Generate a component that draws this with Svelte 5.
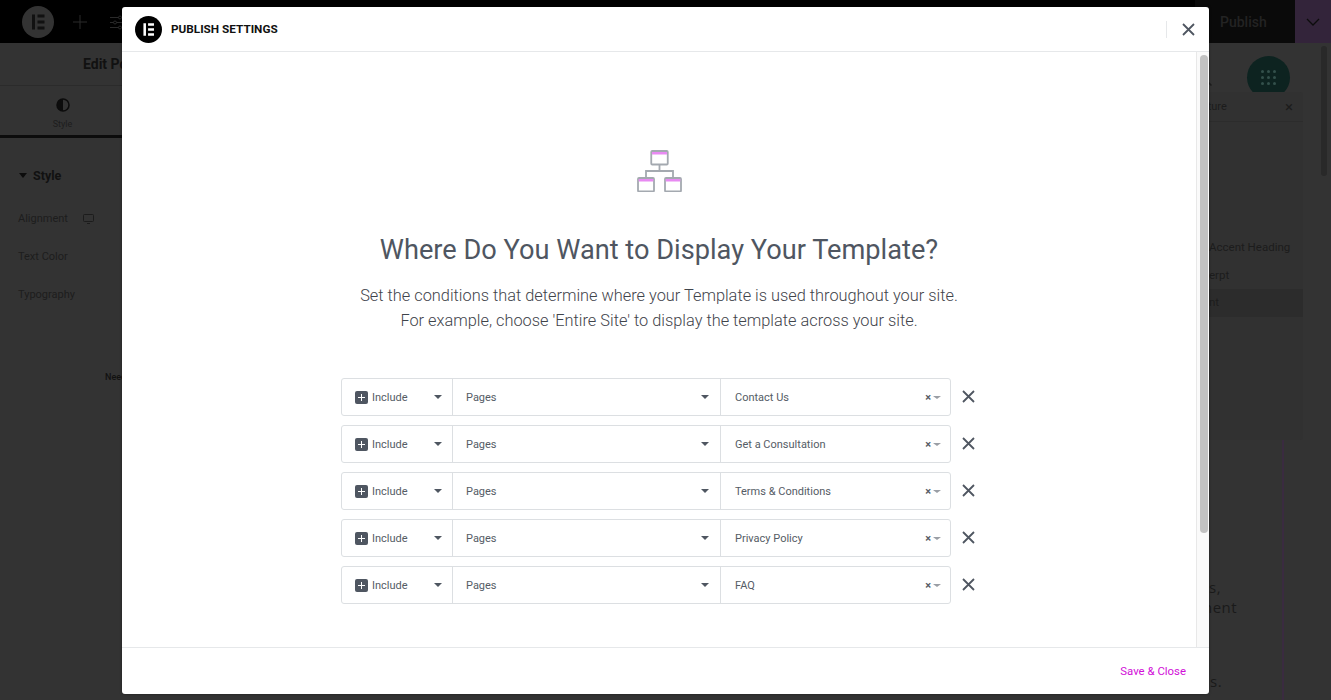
<script>
	const conditions = ['Contact Us', 'Get a Consultation', 'Terms & Conditions', 'Privacy Policy', 'FAQ']
	const layers = ['Accent Heading', 'erpt', 'nt']
</script>

{#snippet logo(size)}
	<svg class="logo" width={size} height={size} viewBox="0 0 32 32">
		<circle cx="16" cy="16" r="16" fill="currentColor" />
		<path d="M10 8.500h3v15h-3zM15.500 8.500h7v3h-7zM15.500 14.500h7v3h-7zM15.500 20.500h7v3h-7z" fill="var(--mark)" />
	</svg>
{/snippet}

<div class="page">
	<header class="topbar">
		<div class="tools">
			<span class="bg-logo">{@render logo(32)}</span>
			<svg width="16" height="16" viewBox="0 0 16 16" stroke="#2a2a2a" fill="none"><path d="M8 1v14M1 8h14" /></svg>
			<svg class="sliders" width="16" height="16" viewBox="0 0 16 16" stroke="#2a2a2a" fill="none"><path d="M0 3.500h16M0 8.500h16M0 13.500h16" /><circle cx="10" cy="3.500" r="1.500" fill="#000" /><circle cx="5" cy="8.500" r="1.500" fill="#000" /><circle cx="10" cy="13.500" r="1.500" fill="#000" /></svg>
		</div>
		<div class="publish">Publish</div>
		<div class="more">
			<svg width="14" height="8" viewBox="0 0 14 8" fill="none" stroke="#0c0c0c" stroke-width="1.300"><path d="M1 1l6 6 6-6" /></svg>
		</div>
	</header>

	<div class="workspace">
		<aside class="panel">
			<div class="panel-title">Edit Post Content</div>
			<div class="tabs">
				<div class="tab">
					<svg width="14" height="14" viewBox="0 0 14 14"><circle cx="7" cy="7" r="6" fill="none" stroke="#0c0c0c" stroke-width="1.500" /><path d="M7 1a6 6 0 0 0 0 12z" fill="#0c0c0c" /></svg>
					<span>Style</span>
				</div>
			</div>
			<div class="section-title"><i class="caret"></i>Style</div>
			<div class="control">Alignment
				<svg width="11" height="10" viewBox="0 0 11 10" fill="none" stroke="#1c1c1c"><rect x="0.500" y="0.500" width="10" height="7" rx="1" /><path d="M4 9.500h3" /></svg>
			</div>
			<div class="control">Text Color</div>
			<div class="control">Typography</div>
			<div class="need">Need Help</div>
		</aside>

		<main class="canvas">
			<div class="canvas-tools">
				<svg width="22" height="22" viewBox="0 0 22 22" fill="none" stroke="#1d1d1d" stroke-width="1.500"><circle cx="8" cy="8" r="6" /><path d="M12.500 12.500l6 6" /></svg>
				<div class="apps">
					{#each Array(9) as _}<i></i>{/each}
				</div>
			</div>
			<div class="copy">
				<p>s,<br />nent</p>
				<p>s.</p>
			</div>
			<div class="rule"></div>
		</main>
		<div class="edge"><i></i></div>
	</div>

	<section class="navigator">
		<div class="nav-head"><span>Structure</span><b>×</b></div>
		<ul>
			{#each layers as layer, i}
				<li class:active={i === 2}>{layer}</li>
			{/each}
		</ul>
	</section>

	<div class="modal">
		<div class="modal-head">
			<span class="head-logo">{@render logo(27)}</span>
			<h2>PUBLISH SETTINGS</h2>
			<button class="close" aria-label="Close">
				<svg width="13" height="13" viewBox="0 0 13 13" stroke="#4f5661" stroke-width="1.800"><path d="M1 1l11 11M12 1L1 12" /></svg>
			</button>
		</div>

		<div class="modal-body">
			<div class="content">
				<svg class="tree" width="45" height="42" viewBox="0 0 45 42" fill="none">
					<path d="M22.500 15v6M9 28v-7h27v7" stroke="#a4a9b0" stroke-width="1.800" />
					<g stroke="#a4a9b0" stroke-width="1.800">
						<rect x="14.250" y="1" width="16.500" height="13.500" rx="1" />
						<rect x="1" y="28" width="16" height="13.500" rx="1" />
						<rect x="28" y="28" width="16" height="13.500" rx="1" />
					</g>
					<g fill="#e88af2">
						<rect x="15" y="2" width="15" height="2.500" />
						<rect x="1.750" y="29" width="14.500" height="2.500" />
						<rect x="28.750" y="29" width="14.500" height="2.500" />
					</g>
				</svg>
				<h1>Where Do You Want to Display Your Template?</h1>
				<p class="intro">Set the conditions that determine where your Template is used throughout your site.<br />For example, choose 'Entire Site' to display the template across your site.</p>

				<div class="rows">
					{#each conditions as condition}
						<div class="row">
							<div class="fields">
								<div class="field type">
									<span class="plus"></span>
									<span>Include</span>
									<i class="arrow"></i>
								</div>
								<div class="field pages">
									<span>Pages</span>
									<i class="arrow"></i>
								</div>
								<div class="field page-name">
									<span>{condition}</span>
									<span class="clear">×</span>
									<i class="arrow small"></i>
								</div>
							</div>
							<svg class="remove" width="13" height="13" viewBox="0 0 13 13" stroke="#4f5661" stroke-width="1.800"><path d="M1 1l11 11M12 1L1 12" /></svg>
						</div>
					{/each}
				</div>
			</div>
			<div class="scroll"><i></i></div>
		</div>

		<div class="modal-foot">
			<button class="save">Save &amp; Close</button>
		</div>
	</div>
</div>

<style>
	:global(body) {
		background: #333;
	}

	.page {
		position: relative;
		height: 700px;
		overflow: hidden;
		display: flex;
		flex-direction: column;
		font-family: Roboto, 'Liberation Sans', sans-serif;
		background: #333;
		color: #1b1b1b;
	}

	.topbar {
		height: 43px;
		flex: none;
		display: flex;
		background: #000;
	}

	.tools {
		flex: 1;
		display: flex;
		align-items: center;
		gap: 18px;
		padding-left: 22px;
	}

	.sliders {
		margin-left: 4px;
	}

	.bg-logo {
		color: #333;
		--mark: #111;
		display: flex;
	}

	.publish {
		width: 100px;
		display: flex;
		align-items: center;
		padding-left: 25px;
		box-sizing: border-box;
		background: #0a0a0a;
		color: #232323;
		font-size: 14px;
		font-weight: 500;
	}

	.more {
		width: 36px;
		display: flex;
		align-items: center;
		justify-content: center;
		background: #33243a;
	}

	.workspace {
		flex: 1;
		display: flex;
	}

	.panel {
		width: 306px;
		flex: none;
		font-size: 11px;
		color: #1d1d1d;
	}

	.panel-title {
		height: 43px;
		box-sizing: border-box;
		border-bottom: 1px solid #2b2b2b;
		padding: 13px 0 0 83px;
		font-size: 14px;
		font-weight: 700;
		color: #111;
		white-space: nowrap;
	}

	.tabs {
		display: flex;
		height: 52px;
		box-sizing: border-box;
		border-bottom: 3px solid #0c0c0c;
	}

	.tab {
		width: 125px;
		display: flex;
		flex-direction: column;
		align-items: center;
		gap: 7px;
		padding-top: 12px;
		font-size: 9px;
	}

	.section-title {
		display: flex;
		align-items: center;
		gap: 6px;
		padding: 30px 0 0 19px;
		font-size: 12.500px;
		font-weight: 700;
		color: #111;
	}

	.caret {
		border: 4px solid transparent;
		border-top: 5px solid #0c0c0c;
		border-bottom: 0;
	}

	.control {
		display: flex;
		align-items: center;
		gap: 15px;
		height: 13px;
		padding: 0 0 0 18px;
		margin-top: 25px;
	}

	.section-title + .control {
		margin-top: 29px;
	}

	.need {
		padding: 71px 0 0 105px;
		font-size: 9px;
		font-weight: 500;
		color: #111;
		white-space: nowrap;
	}

	.canvas {
		flex: 1;
		display: flex;
		flex-direction: column;
		position: relative;
	}

	.canvas-tools {
		display: flex;
		justify-content: flex-end;
		align-items: center;
		gap: 32px;
		padding: 13px 15px 0 0;
	}

	.apps {
		width: 43px;
		height: 43px;
		box-sizing: border-box;
		padding: 13px;
		border-radius: 50%;
		background: #0d2320;
		display: grid;
		grid-template-columns: repeat(3, 1fr);
		place-items: center;
	}

	.apps i {
		width: 3px;
		height: 3px;
		border-radius: 50%;
		background: #33504b;
	}

	.copy {
		align-self: flex-end;
		width: 40px;
		margin: 478px 62px 0 0;
		font-family: 'Open Sans', sans-serif;
		font-size: 15px;
		line-height: 20px;
		letter-spacing: 0.5px;
		color: #1a1a1a;
	}

	.copy p {
		margin: 0;
		text-indent: 6px;
	}

	.copy p + p {
		margin-top: 54px;
		text-indent: 7px;
	}

	.rule {
		position: absolute;
		left: 976px;
		top: 397px;
		bottom: 0;
		width: 2px;
		background: #3a2b40;
	}

	.edge {
		width: 26px;
		flex: none;
		box-sizing: border-box;
		padding: 3px 4px 0 16px;
	}

	.edge i {
		display: block;
		height: 130px;
		border-radius: 3px;
		background: #292929;
	}

	.navigator {
		position: absolute;
		left: 1100px;
		top: 92px;
		width: 203px;
		height: 348px;
		box-sizing: border-box;
		background: #313131;
		border-radius: 3px;
		font-size: 11px;
		color: #1c1c1c;
	}

	.nav-head {
		display: flex;
		justify-content: space-between;
		align-items: center;
		height: 29px;
		padding: 0 10px 0 82px;
		border-bottom: 1px solid #2c2c2c;
	}

	.nav-head b {
		font-size: 15px;
		font-weight: 400;
	}

	ul {
		list-style: none;
		margin: 0;
		padding: 112px 0 0;
	}

	li {
		height: 27.500px;
		line-height: 27.500px;
		padding-left: 109px;
		white-space: nowrap;
		font-size: 11.500px;
	}

	.active {
		background: #2c2c2c;
	}

	.modal {
		position: absolute;
		left: 122px;
		top: 7px;
		width: 1087px;
		height: 687px;
		display: flex;
		flex-direction: column;
		background: #fff;
		border-radius: 3px;
		box-shadow: 0 0 3px rgba(0, 0, 0, 0.4);
	}

	.modal-head {
		height: 45px;
		flex: none;
		box-sizing: border-box;
		display: flex;
		align-items: center;
		gap: 9px;
		padding: 0 14px 0 13px;
		border-bottom: 1px solid #e6e8ea;
	}

	.head-logo {
		color: #000;
		--mark: #fff;
		display: flex;
	}

	h2 {
		flex: 1;
		margin: 0;
		font-size: 11.750px;
		font-weight: 700;
		color: #111;
	}

	button {
		border: 0;
		background: none;
		padding: 0;
		font: inherit;
	}

	.close {
		display: flex;
		align-items: center;
		height: 17px;
		padding-left: 15px;
		border-left: 1px solid #e6e8ea;
	}

	.modal-body {
		flex: 1;
		min-height: 0;
		display: flex;
	}

	.content {
		flex: 1;
		display: flex;
		flex-direction: column;
		align-items: center;
		padding-top: 98px;
	}

	.tree {
		flex: none;
		margin-left: 1px;
	}

	h1 {
		margin: 43px 0 0;
		font-size: 27.200px;
		line-height: 30px;
		font-weight: 400;
		color: #4f5661;
	}

	.intro {
		margin: 18px 0 0;
		text-align: center;
		font-size: 16.350px;
		line-height: 25px;
		font-weight: 300;
		color: #3f444b;
	}

	.rows {
		margin-top: 45px;
		display: flex;
		flex-direction: column;
		gap: 9px;
		margin-right: 2px;
	}

	.row {
		display: flex;
		align-items: center;
		gap: 11px;
	}

	.remove {
		flex: none;
		margin-bottom: 2px;
	}

	.fields {
		width: 610px;
		height: 38px;
		box-sizing: border-box;
		display: flex;
		border: 1px solid #dcdfe2;
		border-radius: 3px;
		font-size: 11px;
		color: #555c65;
	}

	.field {
		display: flex;
		align-items: center;
		box-sizing: border-box;
	}

	.type {
		width: 111px;
		gap: 4px;
		padding: 0 10px 0 13px;
		border-right: 1px solid #dcdfe2;
	}

	.pages {
		width: 268px;
		padding: 0 11px 0 13px;
		border-right: 1px solid #dcdfe2;
	}

	.page-name {
		flex: 1;
		padding: 0 9px 0 14px;
	}

	.plus {
		position: relative;
		width: 13px;
		height: 13px;
		border-radius: 2px;
		background: #4f5661;
	}

	.plus::before,
	.plus::after {
		content: '';
		position: absolute;
		background: #fff;
	}

	.plus::before {
		left: 3px;
		top: 6px;
		width: 7px;
		height: 1px;
	}

	.plus::after {
		left: 6px;
		top: 3px;
		width: 1px;
		height: 7px;
	}

	.arrow {
		margin-left: auto;
		border: 4px solid transparent;
		border-top: 4px solid #4f5661;
		border-bottom: 0;
	}

	.arrow.small {
		margin-left: 2px;
		border-width: 4px;
		border-top: 3px solid #9a9ea5;
		border-bottom: 0;
	}

	.clear {
		margin-left: auto;
		font-size: 11px;
		font-weight: 700;
	}

	.scroll {
		width: 13px;
		flex: none;
		box-sizing: border-box;
		padding: 3px 1px 0 3px;
		background: #fafafa;
		border-left: 1px solid #e8e8e8;
	}

	.scroll i {
		display: block;
		height: 478px;
		border-radius: 4px;
		background: #c2c2c2;
	}

	.modal-foot {
		height: 47px;
		flex: none;
		box-sizing: border-box;
		display: flex;
		justify-content: flex-end;
		align-items: center;
		padding: 0 23px 0 0;
		border-top: 1px solid #e6e8ea;
	}

	.save {
		color: #d10ed8;
		font-size: 11.400px;
	}
</style>
